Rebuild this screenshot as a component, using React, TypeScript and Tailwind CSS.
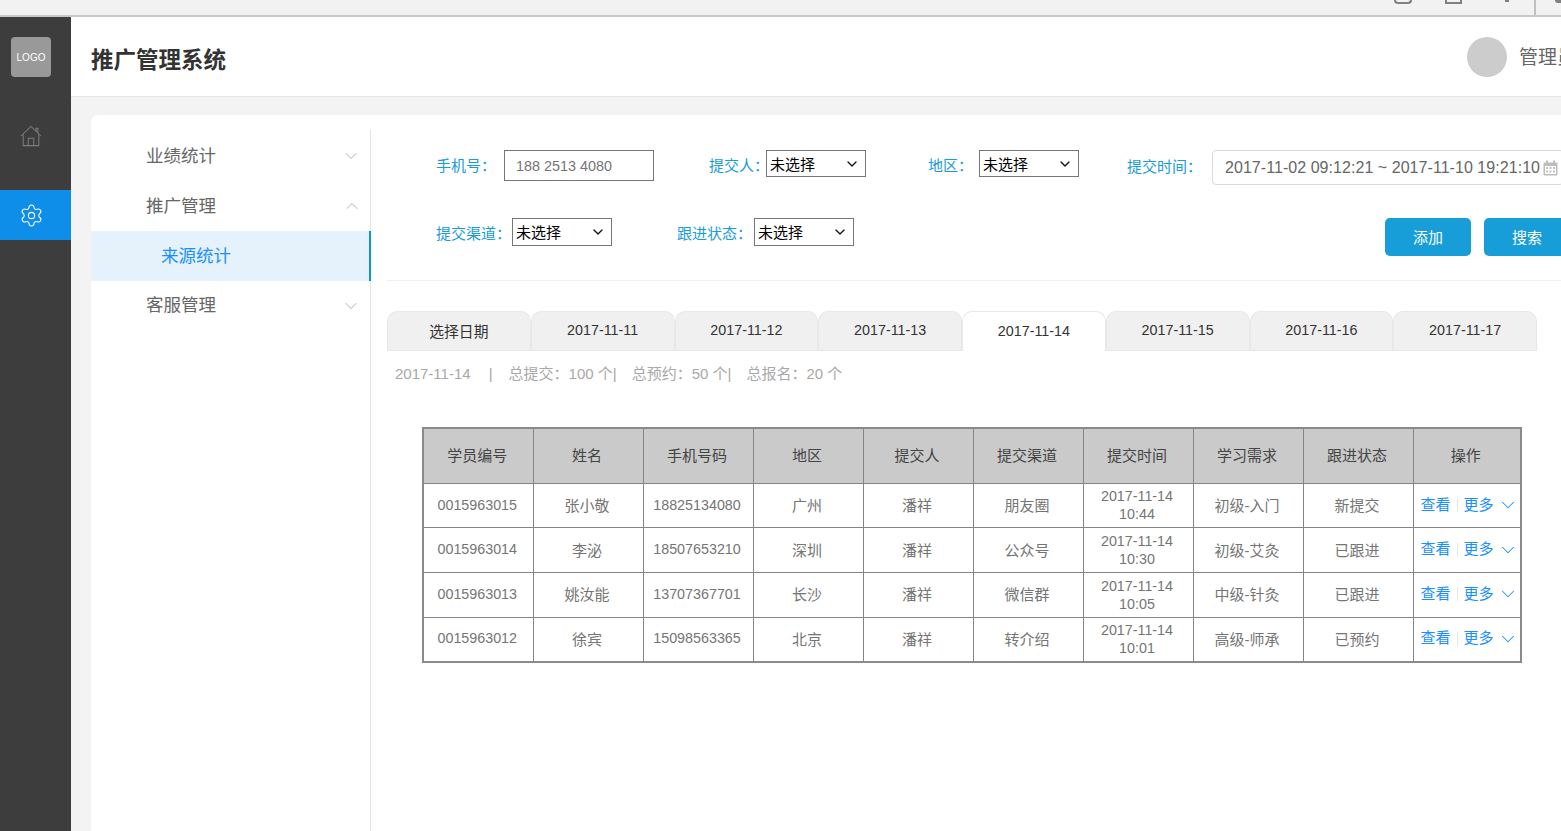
import React from "react";
import { ChevronDown, ChevronUp, Settings } from "lucide-react";

const font = { fontFamily: '"Liberation Sans","Noto Sans CJK SC",sans-serif' };

const House = () => (
  <svg width="22" height="22" viewBox="0 0 24 24" fill="none" stroke="#7d7d7d" strokeWidth="1.1">
    <path d="M1 12 L12 1.5 L23 12" />
    <path d="M17.5 6.5 V3.5 H19.5 V8.5" />
    <path d="M3.5 10 V22.5 H20.5 V10" />
    <path d="M9 22.5 V14.5 H15 V22.5" />
  </svg>
);

const Calendar = () => (
  <svg width="15" height="16" viewBox="0 0 15 16" fill="#bdbdbd" className="shrink-0">
    <path d="M1.5 2.5 H13.5 A1 1 0 0 1 14.5 3.5 V14.5 A1 1 0 0 1 13.5 15.5 H1.5 A1 1 0 0 1 .5 14.5 V3.5 A1 1 0 0 1 1.5 2.5 Z" />
    <rect x="3" y="0.5" width="2" height="3.5" />
    <rect x="10" y="0.5" width="2" height="3.5" />
    <g fill="#fff">
      <rect x="2" y="6" width="11" height="8" />
    </g>
    <g fill="#c4c4c4">
      <rect x="3" y="7" width="2" height="2" /><rect x="6.5" y="7" width="2" height="2" /><rect x="10" y="7" width="2" height="2" />
      <rect x="3" y="10.5" width="2" height="2" /><rect x="6.5" y="10.5" width="2" height="2" /><rect x="10" y="10.5" width="2" height="2" />
    </g>
  </svg>
);

const Sel = ({ tall }: { tall?: boolean }) => (
  <div className="relative w-[100px] shrink-0">
    <select
      defaultValue="未选择"
      className={
        (tall ? "h-[28px] " : "h-[27px] ") +
        "block w-full appearance-none border border-[#767676] bg-white pl-[3px] pt-[3px] text-[15px] text-black"
      }
    >
      <option>未选择</option>
    </select>
    <ChevronDown size={16} strokeWidth={2} color="#111111" className="pointer-events-none absolute right-[6px] top-[6px]" />
  </div>
);

const headers = ["学员编号", "姓名", "手机号码", "地区", "提交人", "提交渠道", "提交时间", "学习需求", "跟进状态", "操作"];
const rows = [
  ["0015963015", "张小敬", "18825134080", "广州", "潘祥", "朋友圈", "10:44", "初级-入门", "新提交"],
  ["0015963014", "李泌", "18507653210", "深圳", "潘祥", "公众号", "10:30", "初级-艾灸", "已跟进"],
  ["0015963013", "姚汝能", "13707367701", "长沙", "潘祥", "微信群", "10:05", "中级-针灸", "已跟进"],
  ["0015963012", "徐宾", "15098563365", "北京", "潘祥", "转介绍", "10:01", "高级-师承", "已预约"],
];
const tabs = ["选择日期", "2017-11-11", "2017-11-12", "2017-11-13", "2017-11-14", "2017-11-15", "2017-11-16", "2017-11-17"];

export default function App() {
  return (
    <div style={font} className="flex h-[831px] w-[1561px] flex-col overflow-hidden bg-white">
      <div className="flex h-[17px] shrink-0 items-start border-b-2 border-[#c8c8c8] bg-[#f2f2f2]">
        <div className="ml-[1394px] h-[4px] w-[18px] rounded-b-sm border-2 border-t-0 border-[#808080]" />
        <div className="ml-[33px] h-[4px] w-[17px] border-2 border-t-0 border-[#808080]" />
        <div className="ml-[43px] h-[2px] w-[4px] bg-[#808080]" />
        <div className="ml-[25px] h-[15px] w-[2px] bg-[#c0c0c0]" />
        <div className="ml-[19px] h-[3px] w-[6px] rounded-bl-sm bg-[#808080]" />
      </div>
      <div className="flex min-h-0 flex-1">
        <aside className="flex w-[71px] shrink-0 flex-col bg-[#3d3d3d]">
          <div className="ml-[11px] mt-[20px] flex h-[40px] w-[40px] items-center justify-center rounded-[4px] bg-[#999999] text-[10px] text-white">LOGO</div>
          <div className="mt-[34px] flex h-[50px] items-center justify-center pr-[9px]"><House /></div>
          <div className="mt-[29px] flex h-[50px] items-center justify-center bg-[#0e8de9] pr-[9px]">
            <Settings size={25} strokeWidth={1} color="#ffffff" />
          </div>
        </aside>
        <div className="flex min-w-0 flex-1 flex-col">
          <header className="flex h-[80px] shrink-0 items-center border-b border-[#e6e6e6] pl-[20px]">
            <h1 className="mt-[8px] flex-1 text-[22.5px] font-bold text-[#333333]">推广管理系统</h1>
            <div className="h-[40px] w-[40px] shrink-0 rounded-full bg-[#cccccc]" />
            <div className="ml-[12px] mt-[4px] w-[42px] shrink-0 overflow-hidden whitespace-nowrap text-[19px] text-[#666666]">管理员</div>
          </header>
          <main className="min-h-0 flex-1 bg-[#f3f3f3] pl-[20px] pt-[18px]">
            <div className="flex h-full w-[1500px] rounded-tl-[8px] bg-white pt-[15px]">
              <nav className="w-[280px] shrink-0 border-r border-[#e4e4e4] text-[17.5px] text-[#666666]">
                <div className="flex h-[51px] items-center justify-between pl-[55px] pr-[9px]"><span className="mt-[1px]">业绩统计</span><ChevronDown size={20} strokeWidth={1.1} color="#aaa" /></div>
                <div className="flex h-[50px] items-center justify-between pl-[55px] pr-[8px]"><span className="mt-[1px]">推广管理</span><ChevronUp size={20} strokeWidth={1.1} color="#aaa" /></div>
                <div className="-mr-px flex h-[50px] items-center border-r-2 border-[#0e8de9] bg-[#e5f2fc] pl-[70px] text-[#1890ff]">来源统计</div>
                <div className="flex h-[49px] items-center justify-between pl-[55px] pr-[9px]"><span>客服管理</span><ChevronDown size={20} strokeWidth={1.1} color="#aaa" /></div>
              </nav>
              <section className="ml-[16px] min-w-0 flex-1">
                <div className="h-[151px] w-[1174px] border-b border-[#f0f0f0] text-[15px] text-[#1a9cd8]">
                  <div className="flex h-[71px] w-max items-start pl-[49px] pt-[20px]">
                    <span className="mt-[5px] w-[68px]">手机号：</span>
                    <div className="flex h-[31px] w-[150px] items-center border border-[#767676] pl-[11px] pt-[2px] text-[14.4px] text-[#757575]">188 2513 4080</div>
                    <span className="ml-[55px] mt-[5px] w-[57px] whitespace-nowrap">提交人：</span>
                    <Sel />
                    <span className="ml-[62px] mt-[5px] w-[51px] whitespace-nowrap">地区：</span>
                    <Sel />
                    <span className="ml-[48px] mt-[6px] w-[85px] whitespace-nowrap">提交时间：</span>
                    <div className="flex h-[35px] w-[352px] items-center rounded-[4px] border border-[#d9d9d9] pl-[12px] text-[16px] tracking-[0.05px] whitespace-nowrap text-[#666666]">
                      <span>2017-11-02 09:12:21 ~ 2017-11-10 19:21:10</span>
                      <span className="ml-[3px]"><Calendar /></span>
                    </div>
                  </div>
                  <div className="flex w-max items-start pl-[49px] pt-[17px]">
                    <span className="mt-[5px] w-[76px] whitespace-nowrap">提交渠道：</span>
                    <Sel tall />
                    <span className="ml-[65px] mt-[5px] w-[77px] whitespace-nowrap">跟进状态：</span>
                    <Sel tall />
                    <button className="ml-[531px] h-[38px] w-[86px] rounded-[5px] bg-[#179dd8] pt-[2px] text-[15px] text-white">添加</button>
                    <button className="ml-[13px] h-[38px] w-[86px] rounded-[5px] bg-[#179dd8] pt-[2px] text-[15px] text-white">搜索</button>
                  </div>
                </div>
                <div className="mt-[30px] flex h-[40px] w-[1150px] border-b border-[#e8e8e8]">
                  {tabs.map((t, i) => (
                    <div
                      key={t}
                      className={
                        i === 4
                          ? "flex h-[40px] flex-1 items-center justify-center rounded-t-[10px] border border-b-0 border-[#e8e8e8] bg-white text-[14.3px] text-[#333333]"
                          : i === 0
                            ? "flex h-[39px] flex-1 items-center justify-center rounded-t-[10px] border border-b-0 border-[#e8e8e8] bg-[#f0f0f0] pt-[3px] text-[14.8px] text-[#333333]"
                            : "flex h-[39px] flex-1 items-center justify-center rounded-t-[10px] border border-b-0 border-[#e8e8e8] bg-[#f0f0f0] text-[14.3px] text-[#333333]"
                      }
                    >
                      {t}
                    </div>
                  ))}
                </div>
                <div className="flex h-[46px] items-center whitespace-nowrap pl-[8px] text-[15px] text-[#a8a8a8]">
                  <span>2017-11-14</span>
                  <span className="ml-[18px]">|</span>
                  <span className="ml-[16px]">总提交：</span>
                  <span>100 个|</span>
                  <span className="ml-[15px]">总预约：</span>
                  <span>50 个|</span>
                  <span className="ml-[15px]">总报名：</span>
                  <span>20 个</span>
                </div>
                <table className="ml-[35px] mt-[30px] w-[1100px] table-fixed border-collapse border-2 border-[#8a8a8a] text-center text-[15px] text-[#757575]">
                  <colgroup>
                    {headers.slice(0, 9).map((h) => (
                      <col key={h} className="w-[110px]" />
                    ))}
                    <col />
                  </colgroup>
                  <thead>
                    <tr className="h-[55px] bg-[#cacaca] text-[#444444]">
                      {headers.map((h) => (
                        <th key={h} className="border border-[#858585] pr-[2px] text-[15px] font-normal">{h}</th>
                      ))}
                    </tr>
                  </thead>
                  <tbody>
                    {rows.map((r) => (
                      <tr key={r[0]} className="h-[44.7px]">
                        {r.map((c, i) =>
                          i === 6 ? (
                            <td key={i} className="border border-[#858585] pr-[2px] text-[14.3px] leading-[18px]">2017-11-14<br />{c}</td>
                          ) : i === 0 || i === 2 ? (
                            <td key={i} className="border border-[#858585] pr-[2px] text-[14.3px]">{c}</td>
                          ) : (
                            <td key={i} className="border border-[#858585] pr-[2px] pt-[2px]">{c}</td>
                          )
                        )}
                        <td className="border border-[#858585] pb-[1px]">
                          <div className="flex items-center pl-[7px] text-[15px] text-[#1890ff]">
                            <span>查看</span>
                            <span className="mx-[6px] h-[14px] w-px bg-[#e6e6e6]" />
                            <span>更多</span>
                            <ChevronDown size={22} strokeWidth={1.1} className="ml-[3px]" />
                          </div>
                        </td>
                      </tr>
                    ))}
                  </tbody>
                </table>
              </section>
            </div>
          </main>
        </div>
      </div>
    </div>
  );
}
